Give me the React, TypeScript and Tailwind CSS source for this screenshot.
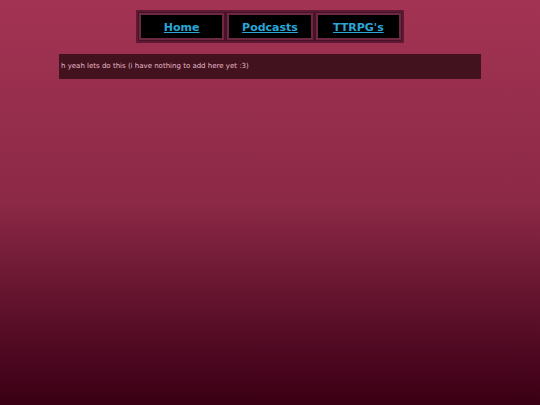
export default function App() {
  const links = ["Home", "Podcasts", "TTRPG's"];
  return (
    <div
      className="min-h-[405px] w-full bg-gradient-to-b from-[#a33353] via-[#8c2947] to-[#3a0014] pt-[10px]"
      style={{ fontFamily: '"DejaVu Sans", Verdana, sans-serif' }}
    >
      <nav className="mx-auto flex w-[268px] gap-[3px] border-2 border-[#5e1a33] bg-[#4a1229] p-[1px]">
        {links.map((l) => (
          <a
            key={l}
            href="#"
            className="flex h-[27px] w-[86px] items-center justify-center border-2 border-[#6e2842] bg-black pt-[3px] text-[11px] font-bold text-[#2aa6d6] underline"
          >
            {l}
          </a>
        ))}
      </nav>
      <div className="mx-auto mt-[11px] flex h-[25px] w-[422px] items-center bg-[#42131f] px-[2px] text-[7px] text-[#e6b8c8]">
        h yeah lets do this (i have nothing to add here yet :3)
      </div>
    </div>
  );
}
